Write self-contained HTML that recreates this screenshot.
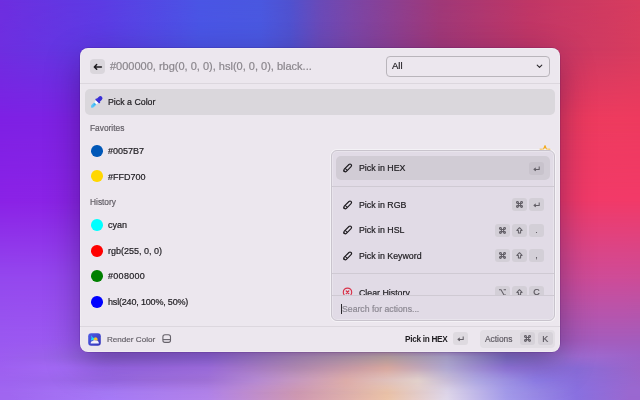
<!DOCTYPE html>
<html><head><meta charset="utf-8">
<style>
*{box-sizing:border-box;margin:0;padding:0}
html,body{width:640px;height:400px;overflow:hidden}
body{position:relative;font-family:"Liberation Sans",sans-serif;background:#6e2ee0}
.bg{position:absolute;left:0;top:0;width:640px;height:400px}
.r0{background:linear-gradient(to right,#6e2ee0 0px,#5d3be4 100px,#4a55e5 200px,#4a58e0 260px,#5052d0 290px,#6a4ab8 320px,#7a46a8 350px,#a03878 440px,#c03666 530px,#c83864 560px,#d83c5e 640px)}
.r1{background:linear-gradient(to right,#6e2ee0 0px,#5d3be4 100px,#4a55e5 200px,#4a58e0 260px,#5052d0 290px,#6a4ab8 320px,#7a46a8 350px,#a03878 440px,#c03666 530px,#c83864 560px,#d83c5e 640px);-webkit-mask-image:linear-gradient(to bottom,transparent 0px,#000 48px);mask-image:linear-gradient(to bottom,transparent 0px,#000 48px)}
.r2{background:linear-gradient(to right,#7e20e4 0px,#7e21e4 22px,#7e22e4 80px,#b03080 320px,#ec3a5e 560px,#ee3b5e 618px,#ee3a5e 640px);-webkit-mask-image:linear-gradient(to bottom,transparent 48px,#000 120px);mask-image:linear-gradient(to bottom,transparent 48px,#000 120px)}
.r3{background:linear-gradient(to right,#8a22e6 0px,#8b22e6 10px,#8a24e6 80px,#c03090 320px,#f03a68 560px,#f23a68 630px,#f23a68 640px);-webkit-mask-image:linear-gradient(to bottom,transparent 120px,#000 200px);mask-image:linear-gradient(to bottom,transparent 120px,#000 200px)}
.r4{background:linear-gradient(to right,#9448ee 0px,#9548ee 22px,#9448ee 80px,#b84aa8 320px,#cc4c98 560px,#cd4c99 618px,#cc4c98 640px);-webkit-mask-image:linear-gradient(to bottom,transparent 200px,#000 280px);mask-image:linear-gradient(to bottom,transparent 200px,#000 280px)}
.r5{background:linear-gradient(to right,#9a58f0 0px,#9b58f1 22px,#9a5af0 80px,#a868c0 320px,#a45cbc 560px,#a55cbc 618px,#a45cbc 640px);-webkit-mask-image:linear-gradient(to bottom,transparent 280px,#000 340px);mask-image:linear-gradient(to bottom,transparent 280px,#000 340px)}
.r6{background:linear-gradient(to right,#9c5cf0 0px,#976ae1 107px,#a276ef 207px,#c8a5cf 297px,#e5cfb9 387px,#d2d0f0 447px,#8e82d9 507px,#9e6cd2 577px,#9c62c8 640px);-webkit-mask-image:linear-gradient(to bottom,transparent 340px,#000 357px);mask-image:linear-gradient(to bottom,transparent 340px,#000 357px)}
.r7{background:linear-gradient(to right,#9e60f0 0px,#a771fa 107px,#b37ef7 207px,#cca2c6 297px,#fec8b1 387px,#cdc8ed 447px,#a084ed 507px,#8a6cd8 577px,#9c64c8 640px);-webkit-mask-image:linear-gradient(to bottom,transparent 357px,#000 368px);mask-image:linear-gradient(to bottom,transparent 357px,#000 368px)}
.r8{background:linear-gradient(to right,#9e62f0 0px,#9c6ce8 110px,#a878e0 207px,#c093dd 256px,#ebb9b1 346px,#f0e0d6 418px,#b8b3ed 476px,#9281ec 536px,#8a6edc 577px,#9a66cc 640px);-webkit-mask-image:linear-gradient(to bottom,transparent 368px,#000 380px);mask-image:linear-gradient(to bottom,transparent 368px,#000 380px)}
.r9{background:linear-gradient(to right,#a066f0 0px,#a067f0 10px,#a77af7 110px,#b384eb 207px,#d09ab3 297px,#ecc4a9 387px,#e0d8eb 447px,#a49beb 507px,#8970e0 577px,#9a68d0 630px,#9a68d0 640px);-webkit-mask-image:linear-gradient(to bottom,transparent 380px,#000 392px);mask-image:linear-gradient(to bottom,transparent 380px,#000 392px)}
.r10{background:linear-gradient(to right,#a066f0 0px,#a067f0 10px,#a77af7 110px,#b384eb 207px,#d09ab3 297px,#ecc4a9 387px,#e0d8eb 447px,#a49beb 507px,#8970e0 577px,#9a68d0 630px,#9a68d0 640px);-webkit-mask-image:linear-gradient(to bottom,transparent 392px,#000 400px);mask-image:linear-gradient(to bottom,transparent 392px,#000 400px)}
.abs{position:absolute}
.win{position:absolute;left:80px;top:48px;width:480px;height:304px;border-radius:8px;background:#ece7ee;
 box-shadow:inset 0 0 0 1px rgba(255,255,255,0.22),0 0 0 0.5px rgba(40,0,90,0.25),0 12px 34px rgba(30,10,70,0.42)}
.t{position:absolute;white-space:pre;line-height:12px;will-change:transform;-webkit-text-stroke:0.2px currentColor}
.sep{position:absolute;height:1px;background:#dcd7de}
.dot{position:absolute;width:11.6px;height:11.6px;border-radius:50%}
.key{position:absolute;width:15px;height:13px;border-radius:3px;background:#d6d2d9;color:#5a565e;font-size:9px;text-align:center;line-height:13px;will-change:transform;-webkit-text-stroke:0.2px currentColor}
.pk{position:absolute;width:15px;height:13px;border-radius:3px;background:#d3cfd7;color:#5a565e;font-size:9px;text-align:center;line-height:13px;will-change:transform;-webkit-text-stroke:0.2px currentColor}
</style></head>
<body>
<div class="bg r0"></div><div class="bg r1"></div><div class="bg r2"></div><div class="bg r3"></div><div class="bg r4"></div><div class="bg r5"></div><div class="bg r6"></div><div class="bg r7"></div><div class="bg r8"></div><div class="bg r9"></div><div class="bg r10"></div>

<div class="win"></div>

<!-- header -->
<div class="abs" style="left:90.2px;top:58.5px;width:15px;height:15px;border-radius:4px;background:#dad6dc"></div>
<svg class="abs" style="left:90.2px;top:58.5px" width="15" height="15" viewBox="0 0 15 15"><path d="M11.4 7.9H4.5M6.7 5.6L4.3 7.9 6.7 10.2" fill="none" stroke="#1c1a1e" stroke-width="1.45" stroke-linecap="round" stroke-linejoin="round"/></svg>
<div class="t" style="left:110px;top:60px;font-size:11px;color:#8a868c">#000000, rbg(0, 0, 0), hsl(0, 0, 0), black...</div>
<div class="abs" style="left:386px;top:56px;width:164px;height:20.5px;border:1px solid #b9b5bb;border-radius:4px"></div>
<div class="t" style="left:392px;top:60px;font-size:9.5px;color:#1e1c20">All</div>
<svg class="abs" style="left:535px;top:63px" width="9" height="6" viewBox="0 0 9 6"><path d="M2.2 2.2L4.5 4.4 6.8 2.2" fill="none" stroke="#2a282c" stroke-width="1.1" stroke-linecap="round" stroke-linejoin="round"/></svg>
<div class="sep" style="left:80px;top:83px;width:480px"></div>

<!-- list -->
<div class="abs" style="left:85px;top:89px;width:470px;height:25.5px;border-radius:5px;background:#dad7dc"></div>
<svg class="abs" style="left:88px;top:94px" width="16" height="16" viewBox="0 0 16 16"><g transform="translate(8.5 8.2) rotate(-46) scale(0.9)"><path d="M-8.4 0 Q-7.8 -1.7 -5.8 -1.75 L-1.6 -1.75 L-1.6 1.75 L-5.8 1.75 Q-7.8 1.7 -8.4 0Z" fill="#5cc6f8"/><path d="M-6.5 0.2 L-2 -0.6 L-2 0.9Z" fill="#2aa6e8" opacity="0.7"/><rect x="-1.8" y="-1.7" width="3" height="3.4" fill="#ffffff"/><rect x="1" y="-3.3" width="2" height="6.6" rx="0.9" fill="#3a2fd6"/><path d="M2.5 -2.4 L5.8 -2.4 Q8.6 -2.4 8.6 0 Q8.6 2.4 5.8 2.4 L2.5 2.4Z" fill="#3a2fd6"/></g></svg>
<div class="t" style="left:108.4px;top:96.3px;font-size:8.8px;color:#1e1c20">Pick a Color</div>

<div class="t" style="left:90.4px;top:122px;font-size:8.35px;color:#646068">Favorites</div>
<div class="dot" style="left:91px;top:145px;background:#0057b7"></div>
<div class="t" style="left:108px;top:145px;font-size:9px;color:#1e1c20">#0057B7</div>
<div class="dot" style="left:91px;top:170px;background:#ffd700"></div>
<div class="t" style="left:108px;top:170.8px;font-size:9px;color:#1e1c20">#FFD700</div>

<div class="t" style="left:90.4px;top:196.2px;font-size:8.35px;color:#646068">History</div>
<div class="dot" style="left:91px;top:219px;background:#00ffff"></div>
<div class="t" style="left:108px;top:218.7px;font-size:9px;color:#1e1c20">cyan</div>
<div class="dot" style="left:91px;top:245px;background:#ff0000"></div>
<div class="t" style="left:108px;top:245px;font-size:9px;color:#1e1c20">rgb(255, 0, 0)</div>
<div class="dot" style="left:91px;top:270px;background:#008000"></div>
<div class="t" style="left:108px;top:270px;font-size:9px;letter-spacing:0.3px;color:#1e1c20">#008000</div>
<div class="dot" style="left:91px;top:296px;background:#0000ff"></div>
<div class="t" style="left:108px;top:296px;font-size:9px;letter-spacing:-0.18px;color:#1e1c20">hsl(240, 100%, 50%)</div>

<!-- star -->
<svg class="abs" style="left:538.5px;top:144px" width="12" height="12" viewBox="0 0 12 12"><path d="M6 1.6 L7.4 5.1 L10.9 5.2 L8.1 7.4 L9 10.6 L6 8.8 L3 10.6 L3.9 7.4 L1.1 5.2 L4.6 5.1Z" fill="none" stroke="#f2aa1a" stroke-width="1.15" stroke-linejoin="round"/></svg>

<!-- footer -->
<div class="sep" style="left:80px;top:326px;width:480px"></div>
<svg class="abs" style="left:87.5px;top:332.5px" width="13" height="13" viewBox="0 0 13 13"><defs><linearGradient id="ag" x1="0" y1="0" x2="1" y2="1"><stop offset="0" stop-color="#4f5ce6"/><stop offset="1" stop-color="#3434b8"/></linearGradient></defs><rect x="0.2" y="0.2" width="12.6" height="12.6" rx="3" fill="url(#ag)"/><path d="M3 2.2 L5.2 5 L6.6 4.3 L5.7 6.9 L2.8 7.4 Q4.3 5.5 3 2.2Z" fill="#22dcf4"/><path d="M5.6 7.4 Q5.8 4.3 8 4.3 Q9.8 4.5 9.7 7.4Z" fill="#f6c52e"/><path d="M2.6 10.6 Q2.4 8.2 4.6 8.1 Q5.6 6.7 7.5 7.5 Q10.8 7.2 10.9 10.6Z" fill="#f4f2fb"/></svg>
<div class="t" style="left:107px;top:334px;font-size:8.1px;color:#67636b">Render Color</div>
<svg class="abs" style="left:161px;top:334px" width="12" height="11" viewBox="0 0 12 11"><rect x="1.9" y="0.7" width="7.6" height="7.7" rx="2.1" fill="none" stroke="#66626a" stroke-width="1.1"/><path d="M1.9 5.6H9.5" stroke="#66626a" stroke-width="1.1"/></svg>

<div class="t" style="left:404.6px;top:334px;font-size:8.2px;font-weight:bold;letter-spacing:-0.28px;-webkit-text-stroke:0px;color:#1e1c20">Pick in HEX</div>
<div class="key" style="left:453px;top:332px;background:#dedae0"><svg width="15" height="13" viewBox="0 0 15 13" style="position:absolute;left:0;top:0"><path d="M10.2 4.4 V7.4 H5.4" fill="none" stroke="#625e66" stroke-width="1.05"/><path d="M6.8 5.9 L5 7.4 L6.8 8.9" fill="none" stroke="#625e66" stroke-width="1.05" stroke-linejoin="round"/></svg></div>
<div class="abs" style="left:480px;top:330px;width:75px;height:18px;border-radius:4px;background:#e2dee4"></div>
<div class="t" style="left:485px;top:333px;font-size:8.4px;color:#615d65">Actions</div>
<div class="key" style="left:520px;top:332px"><svg width="15" height="13" viewBox="0 0 15 13" style="position:absolute;left:0;top:0"><g transform="translate(4.4 3.4)" fill="none" stroke="#625e66" stroke-width="1.05"><circle cx="1.05" cy="1.05" r="0.95"/><circle cx="5.15" cy="1.05" r="0.95"/><circle cx="1.05" cy="5.15" r="0.95"/><circle cx="5.15" cy="5.15" r="0.95"/><path d="M1.05 2H5.15M1.05 4.2H5.15M2 1.05V5.15M4.2 1.05V5.15"/></g></svg></div>
<div class="key" style="left:537.5px;top:332px;width:14.5px;line-height:14.4px">K</div>

<!-- popup -->
<div class="abs" style="left:331px;top:150px;width:224px;height:170.5px;border-radius:6px;background:#e1dbe6;border:1px solid #c9c4cd;box-shadow:0 0 0 1px rgba(255,255,255,0.45),inset 0 0 0 1px rgba(255,255,255,0.25)"></div>
<div class="abs" style="left:336px;top:155.6px;width:214px;height:24.4px;border-radius:5px;background:#d1ccd5"></div>
<div class="t" style="left:359px;top:162px;font-size:8.8px;color:#1e1c20">Pick in HEX</div>
<div class="pk" style="left:529px;top:162px;background:#c8c3cc"><svg width="15" height="13" viewBox="0 0 15 13" style="position:absolute;left:0;top:0"><path d="M10.2 4.4 V7.4 H5.4" fill="none" stroke="#625e66" stroke-width="1.05"/><path d="M6.8 5.9 L5 7.4 L6.8 8.9" fill="none" stroke="#625e66" stroke-width="1.05" stroke-linejoin="round"/></svg></div>
<div class="sep" style="left:332px;top:186px;width:222px;background:#cfcad3"></div>
<div class="t" style="left:359px;top:199px;font-size:8.8px;color:#1e1c20">Pick in RGB</div>
<div class="pk" style="left:512px;top:198px"><svg width="15" height="13" viewBox="0 0 15 13" style="position:absolute;left:0;top:0"><g transform="translate(4.4 3.4)" fill="none" stroke="#625e66" stroke-width="1.05"><circle cx="1.05" cy="1.05" r="0.95"/><circle cx="5.15" cy="1.05" r="0.95"/><circle cx="1.05" cy="5.15" r="0.95"/><circle cx="5.15" cy="5.15" r="0.95"/><path d="M1.05 2H5.15M1.05 4.2H5.15M2 1.05V5.15M4.2 1.05V5.15"/></g></svg></div>
<div class="pk" style="left:529px;top:198px"><svg width="15" height="13" viewBox="0 0 15 13" style="position:absolute;left:0;top:0"><path d="M10.2 4.4 V7.4 H5.4" fill="none" stroke="#625e66" stroke-width="1.05"/><path d="M6.8 5.9 L5 7.4 L6.8 8.9" fill="none" stroke="#625e66" stroke-width="1.05" stroke-linejoin="round"/></svg></div>
<div class="t" style="left:359px;top:224px;font-size:8.8px;color:#1e1c20">Pick in HSL</div>
<div class="pk" style="left:495px;top:224px"><svg width="15" height="13" viewBox="0 0 15 13" style="position:absolute;left:0;top:0"><g transform="translate(4.4 3.4)" fill="none" stroke="#625e66" stroke-width="1.05"><circle cx="1.05" cy="1.05" r="0.95"/><circle cx="5.15" cy="1.05" r="0.95"/><circle cx="1.05" cy="5.15" r="0.95"/><circle cx="5.15" cy="5.15" r="0.95"/><path d="M1.05 2H5.15M1.05 4.2H5.15M2 1.05V5.15M4.2 1.05V5.15"/></g></svg></div>
<div class="pk" style="left:512px;top:224px"><svg width="15" height="13" viewBox="0 0 15 13" style="position:absolute;left:0;top:0"><path d="M7.5 3.7 L10.1 6.4 H8.6 V9 H6.4 V6.4 H4.9 Z" fill="none" stroke="#625e66" stroke-width="1.05" stroke-linejoin="round"/></svg></div>
<div class="pk" style="left:529px;top:224px">.</div>
<div class="t" style="left:359px;top:250px;font-size:8.8px;color:#1e1c20">Pick in Keyword</div>
<div class="pk" style="left:495px;top:249px"><svg width="15" height="13" viewBox="0 0 15 13" style="position:absolute;left:0;top:0"><g transform="translate(4.4 3.4)" fill="none" stroke="#625e66" stroke-width="1.05"><circle cx="1.05" cy="1.05" r="0.95"/><circle cx="5.15" cy="1.05" r="0.95"/><circle cx="1.05" cy="5.15" r="0.95"/><circle cx="5.15" cy="5.15" r="0.95"/><path d="M1.05 2H5.15M1.05 4.2H5.15M2 1.05V5.15M4.2 1.05V5.15"/></g></svg></div>
<div class="pk" style="left:512px;top:249px"><svg width="15" height="13" viewBox="0 0 15 13" style="position:absolute;left:0;top:0"><path d="M7.5 3.7 L10.1 6.4 H8.6 V9 H6.4 V6.4 H4.9 Z" fill="none" stroke="#625e66" stroke-width="1.05" stroke-linejoin="round"/></svg></div>
<div class="pk" style="left:529px;top:249px">,</div>
<div class="sep" style="left:332px;top:273px;width:222px;background:#cfcad3"></div>
<div class="abs" style="left:332px;top:276px;width:222px;height:19px;overflow:hidden">
 <div class="t" style="left:27px;top:10.5px;font-size:8.8px;color:#1e1c20">Clear History</div>
 <svg class="abs" style="left:10px;top:10px" width="12" height="12" viewBox="0 0 12 12"><circle cx="5.5" cy="6.25" r="4.2" fill="none" stroke="#d8334a" stroke-width="1.15"/><path d="M4.3 5L6.7 7.5M6.7 5L4.3 7.5" stroke="#d8334a" stroke-width="1.3" stroke-linecap="round"/></svg>
 <div class="pk" style="left:163px;top:10px"><svg width="15" height="13" viewBox="0 0 15 13" style="position:absolute;left:0;top:0"><path d="M4 3.8 H6 L9 9 H11 M8.6 3.8 H11" fill="none" stroke="#625e66" stroke-width="1.05"/></svg></div>
 <div class="pk" style="left:180px;top:10px"><svg width="15" height="13" viewBox="0 0 15 13" style="position:absolute;left:0;top:0"><path d="M7.5 3.7 L10.1 6.4 H8.6 V9 H6.4 V6.4 H4.9 Z" fill="none" stroke="#625e66" stroke-width="1.05" stroke-linejoin="round"/></svg></div>
 <div class="pk" style="left:197px;top:10px">C</div>
</div>
<div class="sep" style="left:332px;top:295px;width:222px;background:#cfcad3"></div>
<div class="abs" style="left:341px;top:303.5px;width:1.2px;height:10px;background:#2a282c"></div>
<div class="t" style="left:342px;top:302.6px;font-size:8.7px;color:#8c8892">Search for actions...</div>

<!-- pencils -->
<svg class="abs" style="left:338px;top:158px" width="20" height="20" viewBox="0 0 20 20"><g transform="rotate(-45 9.4 10.2)"><rect x="5" y="8.7" width="9.6" height="3" rx="1.5" fill="none" stroke="#1c1a1e" stroke-width="1.15"/><path d="M7.7 8.7V11.7" stroke="#1c1a1e" stroke-width="1"/><path d="M3.9 10.2 L5.6 8.5 L5.6 11.9Z" fill="#1c1a1e"/></g></svg>
<svg class="abs" style="left:338px;top:195px" width="20" height="20" viewBox="0 0 20 20"><g transform="rotate(-45 9.4 10.2)"><rect x="5" y="8.7" width="9.6" height="3" rx="1.5" fill="none" stroke="#1c1a1e" stroke-width="1.15"/><path d="M7.7 8.7V11.7" stroke="#1c1a1e" stroke-width="1"/><path d="M3.9 10.2 L5.6 8.5 L5.6 11.9Z" fill="#1c1a1e"/></g></svg>
<svg class="abs" style="left:338px;top:220px" width="20" height="20" viewBox="0 0 20 20"><g transform="rotate(-45 9.4 10.2)"><rect x="5" y="8.7" width="9.6" height="3" rx="1.5" fill="none" stroke="#1c1a1e" stroke-width="1.15"/><path d="M7.7 8.7V11.7" stroke="#1c1a1e" stroke-width="1"/><path d="M3.9 10.2 L5.6 8.5 L5.6 11.9Z" fill="#1c1a1e"/></g></svg>
<svg class="abs" style="left:338px;top:246px" width="20" height="20" viewBox="0 0 20 20"><g transform="rotate(-45 9.4 10.2)"><rect x="5" y="8.7" width="9.6" height="3" rx="1.5" fill="none" stroke="#1c1a1e" stroke-width="1.15"/><path d="M7.7 8.7V11.7" stroke="#1c1a1e" stroke-width="1"/><path d="M3.9 10.2 L5.6 8.5 L5.6 11.9Z" fill="#1c1a1e"/></g></svg>
</body></html>
